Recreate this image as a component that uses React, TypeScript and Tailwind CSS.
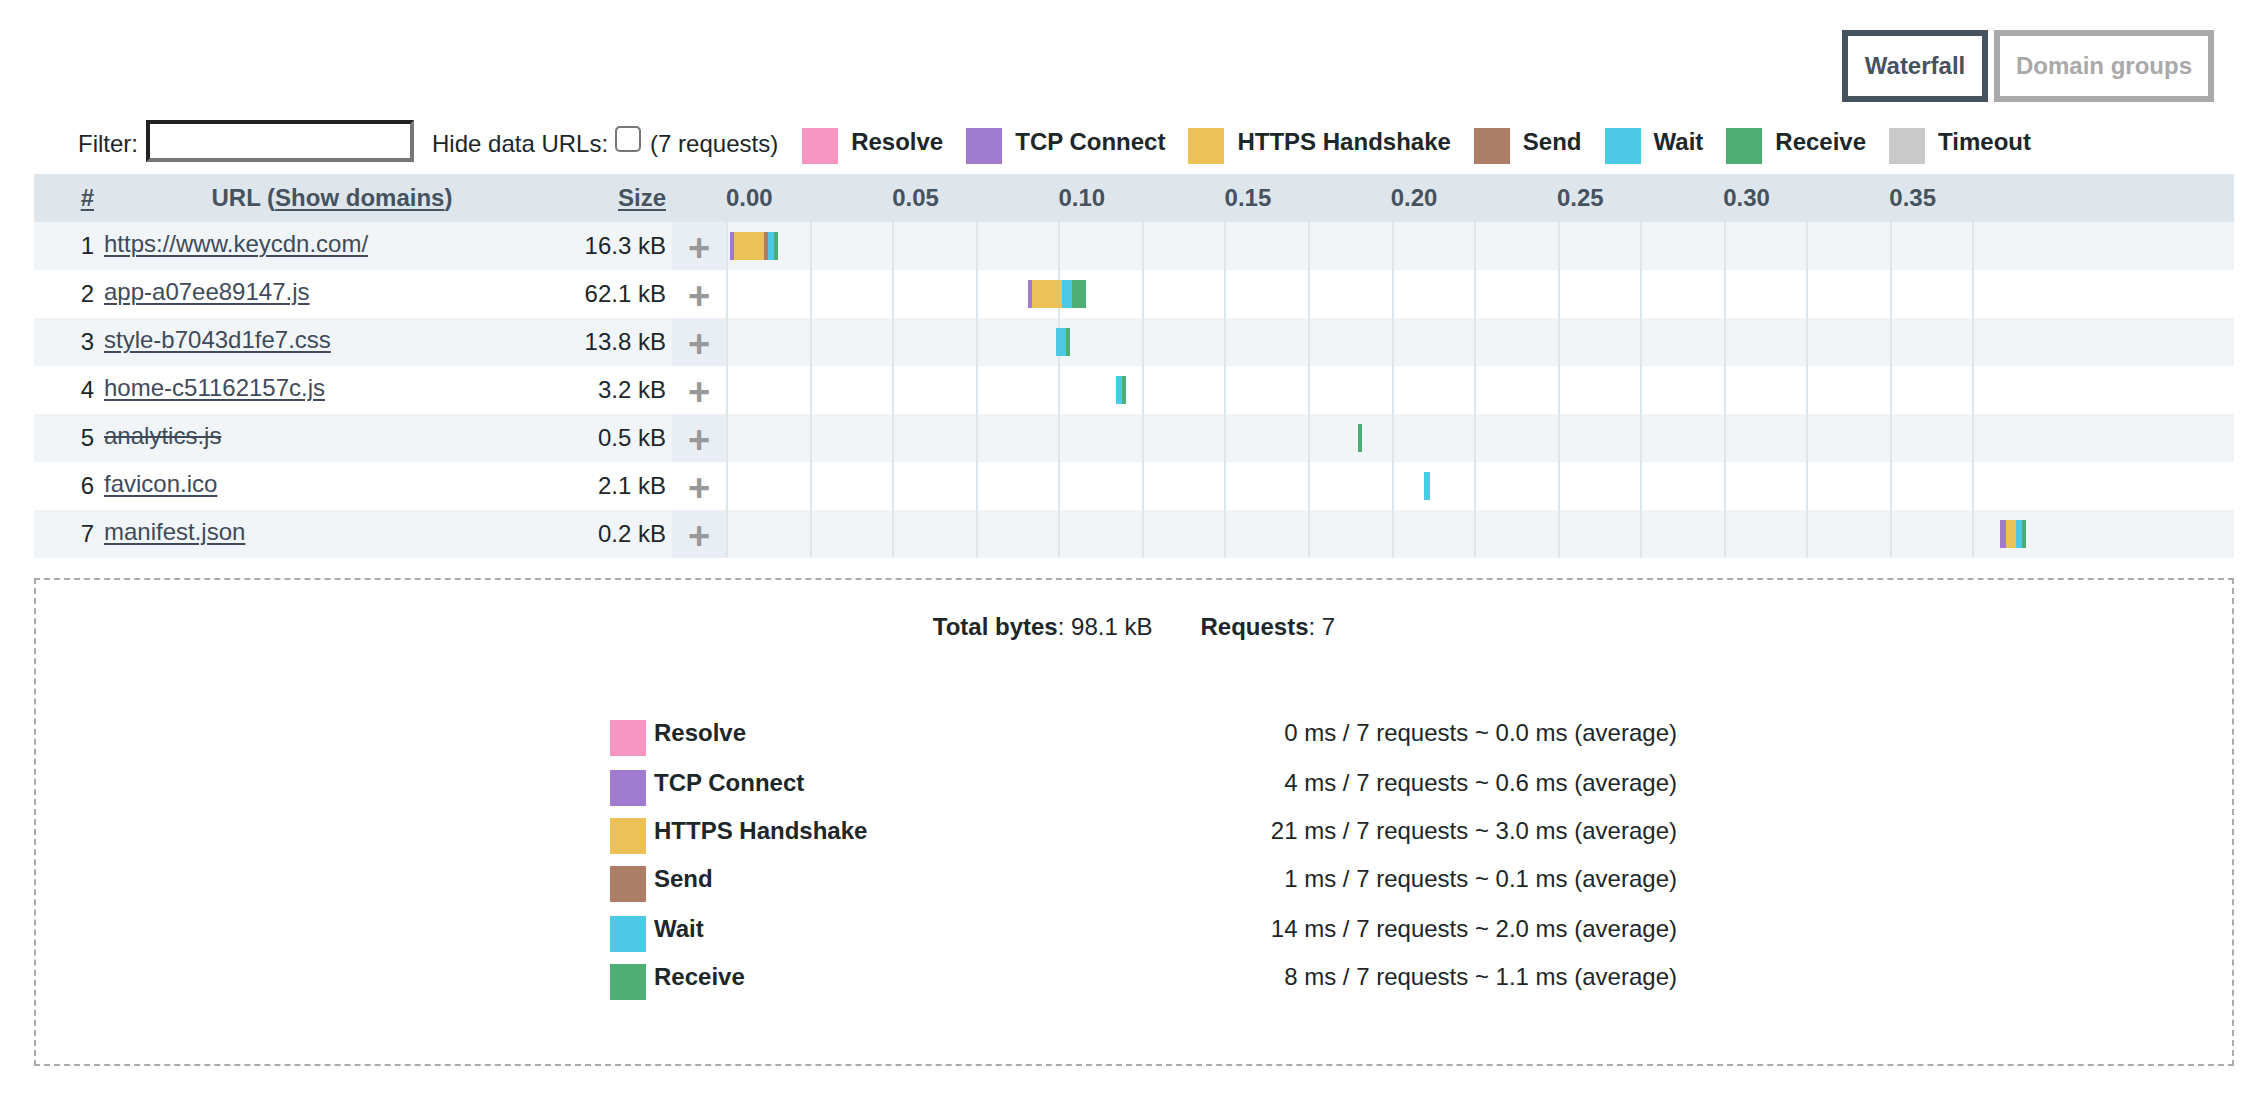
import React from 'react';

const RESOLVE = 'bg-[#f796c2]';
const TCP = 'bg-[#a07acc]';
const HTTPS = 'bg-[#ecc158]';
const SEND = 'bg-[#ac7e68]';
const WAIT = 'bg-[#4ec9e5]';
const RECEIVE = 'bg-[#4eae74]';
const TIMEOUT = 'bg-[#c9c9c9]';

const legend = [
  { name: 'Resolve', color: RESOLVE },
  { name: 'TCP Connect', color: TCP },
  { name: 'HTTPS Handshake', color: HTTPS },
  { name: 'Send', color: SEND },
  { name: 'Wait', color: WAIT },
  { name: 'Receive', color: RECEIVE },
  { name: 'Timeout', color: TIMEOUT },
];

const requests = [
  { id: 1, url: 'https://www.keycdn.com/', size: '16.3 kB', start: 4, parts: [[4, TCP], [30, HTTPS], [4, SEND], [6, WAIT], [4, RECEIVE]] },
  { id: 2, url: 'app-a07ee89147.js', size: '62.1 kB', start: 302, parts: [[4, TCP], [30, HTTPS], [10, WAIT], [14, RECEIVE]] },
  { id: 3, url: 'style-b7043d1fe7.css', size: '13.8 kB', start: 330, parts: [[10, WAIT], [4, RECEIVE]] },
  { id: 4, url: 'home-c51162157c.js', size: '3.2 kB', start: 390, parts: [[6, WAIT], [4, RECEIVE]] },
  { id: 5, url: 'analytics.js', size: '0.5 kB', start: 632, blocked: true, parts: [[4, RECEIVE]] },
  { id: 6, url: 'favicon.ico', size: '2.1 kB', start: 698, parts: [[6, WAIT]] },
  { id: 7, url: 'manifest.json', size: '0.2 kB', start: 1274, parts: [[6, TCP], [10, HTTPS], [6, WAIT], [4, RECEIVE]] },
] as { id: number; url: string; size: string; start: number; blocked?: boolean; parts: [number, string][] }[];

const ticks = ['0.00', '0.05', '0.10', '0.15', '0.20', '0.25', '0.30', '0.35'];
const gridLines = [0, 84, 166, 250, 332, 416, 498, 582, 666, 748, 832, 914, 998, 1080, 1164, 1246];

const stats = [
  { name: 'Resolve', color: RESOLVE, text: '0 ms / 7 requests ~ 0.0 ms (average)', height: 'h-[50px]' },
  { name: 'TCP Connect', color: TCP, text: '4 ms / 7 requests ~ 0.6 ms (average)', height: 'h-[48px]' },
  { name: 'HTTPS Handshake', color: HTTPS, text: '21 ms / 7 requests ~ 3.0 ms (average)', height: 'h-[48px]' },
  { name: 'Send', color: SEND, text: '1 ms / 7 requests ~ 0.1 ms (average)', height: 'h-[50px]' },
  { name: 'Wait', color: WAIT, text: '14 ms / 7 requests ~ 2.0 ms (average)', height: 'h-[48px]' },
  { name: 'Receive', color: RECEIVE, text: '8 ms / 7 requests ~ 1.1 ms (average)', height: 'h-[48px]' },
];

const App = () => {
  return (
    <div className="h-[1096px] bg-white text-[24px] text-[#1d2628] font-['Liberation_Sans',Arial,sans-serif] antialiased overflow-hidden">
      {/* Tabs */}
      <div className="flex justify-end gap-[6px] pt-[30px] pr-[50px]">
        <button className="h-[72px] w-[146px] border-[6px] border-[#47525f] font-bold text-[#47525f]">Waterfall</button>
        <button className="h-[72px] w-[220px] border-[6px] border-[#a9a9a9] font-bold text-[#a9a9a9]">Domain groups</button>
      </div>

      {/* Filter and legend */}
      <div className="mt-[18px] flex h-[54px] items-start pl-[78px] leading-[48px]">
        <span>Filter:</span>
        <input type="text" className="ml-[8px] h-[42px] w-[268px] border-4 border-t-[#222222] border-l-[#222222] border-r-[#767676] border-b-[#767676] bg-white" />
        <span className="ml-[18px]">Hide data URLs:</span>
        <input type="checkbox" className="ml-[7px] mt-[6px] h-[26px] w-[26px] appearance-none rounded-[5px] border-2 border-[#767676] bg-white" />
        <span className="ml-[9px]">(7 requests)</span>
        <div className="ml-[24px] flex gap-[23px] pt-[8px]">
          {legend.map(item => (
            <div key={item.name} className="flex gap-[13px]">
              <span className={`h-[36px] w-[36px] shrink-0 ${item.color}`} />
              <span className="font-bold leading-[28px]">{item.name}</span>
            </div>
          ))}
        </div>
      </div>

      {/* Waterfall table */}
      <div className="mx-[34px] w-[2200px]">
        <div className="flex h-[48px] bg-[#dee6eb] font-bold leading-[48px] text-[#47525f]">
          <div className="w-[60px] text-right underline decoration-2 underline-offset-[3px]">#</div>
          <div className="ml-[10px] w-[456px] text-center">
            URL (<span className="underline decoration-2 underline-offset-[3px]">Show domains</span>)
          </div>
          <div className="w-[106px] text-right underline decoration-2 underline-offset-[3px]">Size</div>
          <div className="w-[60px]" />
          <div className="flex flex-1">
            {ticks.map(tick => (
              <div key={tick} className="w-[166.2px]">{tick}</div>
            ))}
          </div>
        </div>

        {requests.map(req => (
          <div key={req.id} className={`flex h-[48px] leading-[48px] ${req.id % 2 === 1 ? 'bg-[#f1f5f8]' : 'bg-white'}`}>
            <div className="w-[60px] text-right">{req.id}</div>
            <div className="ml-[10px] w-[456px] truncate leading-[43px] text-[#3f4b5a]">
              <a href="#" className={req.blocked ? 'line-through decoration-2' : 'underline decoration-2 underline-offset-[3px]'}>{req.url}</a>
            </div>
            <div className="w-[106px] text-right">{req.size}</div>
            <div className={`ml-[6px] w-[54px] text-center text-[38px] font-bold leading-[52px] text-[#999999] ${req.id % 2 === 1 ? 'bg-[#e8eef4]' : ''}`}>+</div>
            <div className="relative flex-1">
              {gridLines.map(left => (
                <span key={left} className="absolute inset-y-0 w-[2px] bg-[#dee6eb]" style={{ left }} />
              ))}
              <div className="relative flex h-[28px] translate-y-[10px]" style={{ marginLeft: req.start }}>
                {req.parts.map(([width, color], i) => (
                  <span key={i} className={`h-full ${color}`} style={{ width }} />
                ))}
              </div>
            </div>
          </div>
        ))}
      </div>

      {/* Totals */}
      <div className="mx-[34px] mt-[20px] h-[488px] w-[2200px] border-2 border-dashed border-[#aaaaaa] pt-[29px]">
        <div className="flex justify-center gap-[48px] leading-[36px]">
          <span><b>Total bytes</b>: 98.1 kB</span>
          <span><b>Requests</b>: 7</span>
        </div>
        <div className="ml-[574px] mt-[75px] w-[1067px]">
          {stats.map(row => (
            <div key={row.name} className={`flex justify-between leading-[26px] ${row.height}`}>
              <div className="flex gap-[8px]">
                <span className={`h-[36px] w-[36px] shrink-0 ${row.color}`} />
                <span className="font-bold">{row.name}</span>
              </div>
              <span>{row.text}</span>
            </div>
          ))}
        </div>
      </div>
    </div>
  );
};

export default App;
